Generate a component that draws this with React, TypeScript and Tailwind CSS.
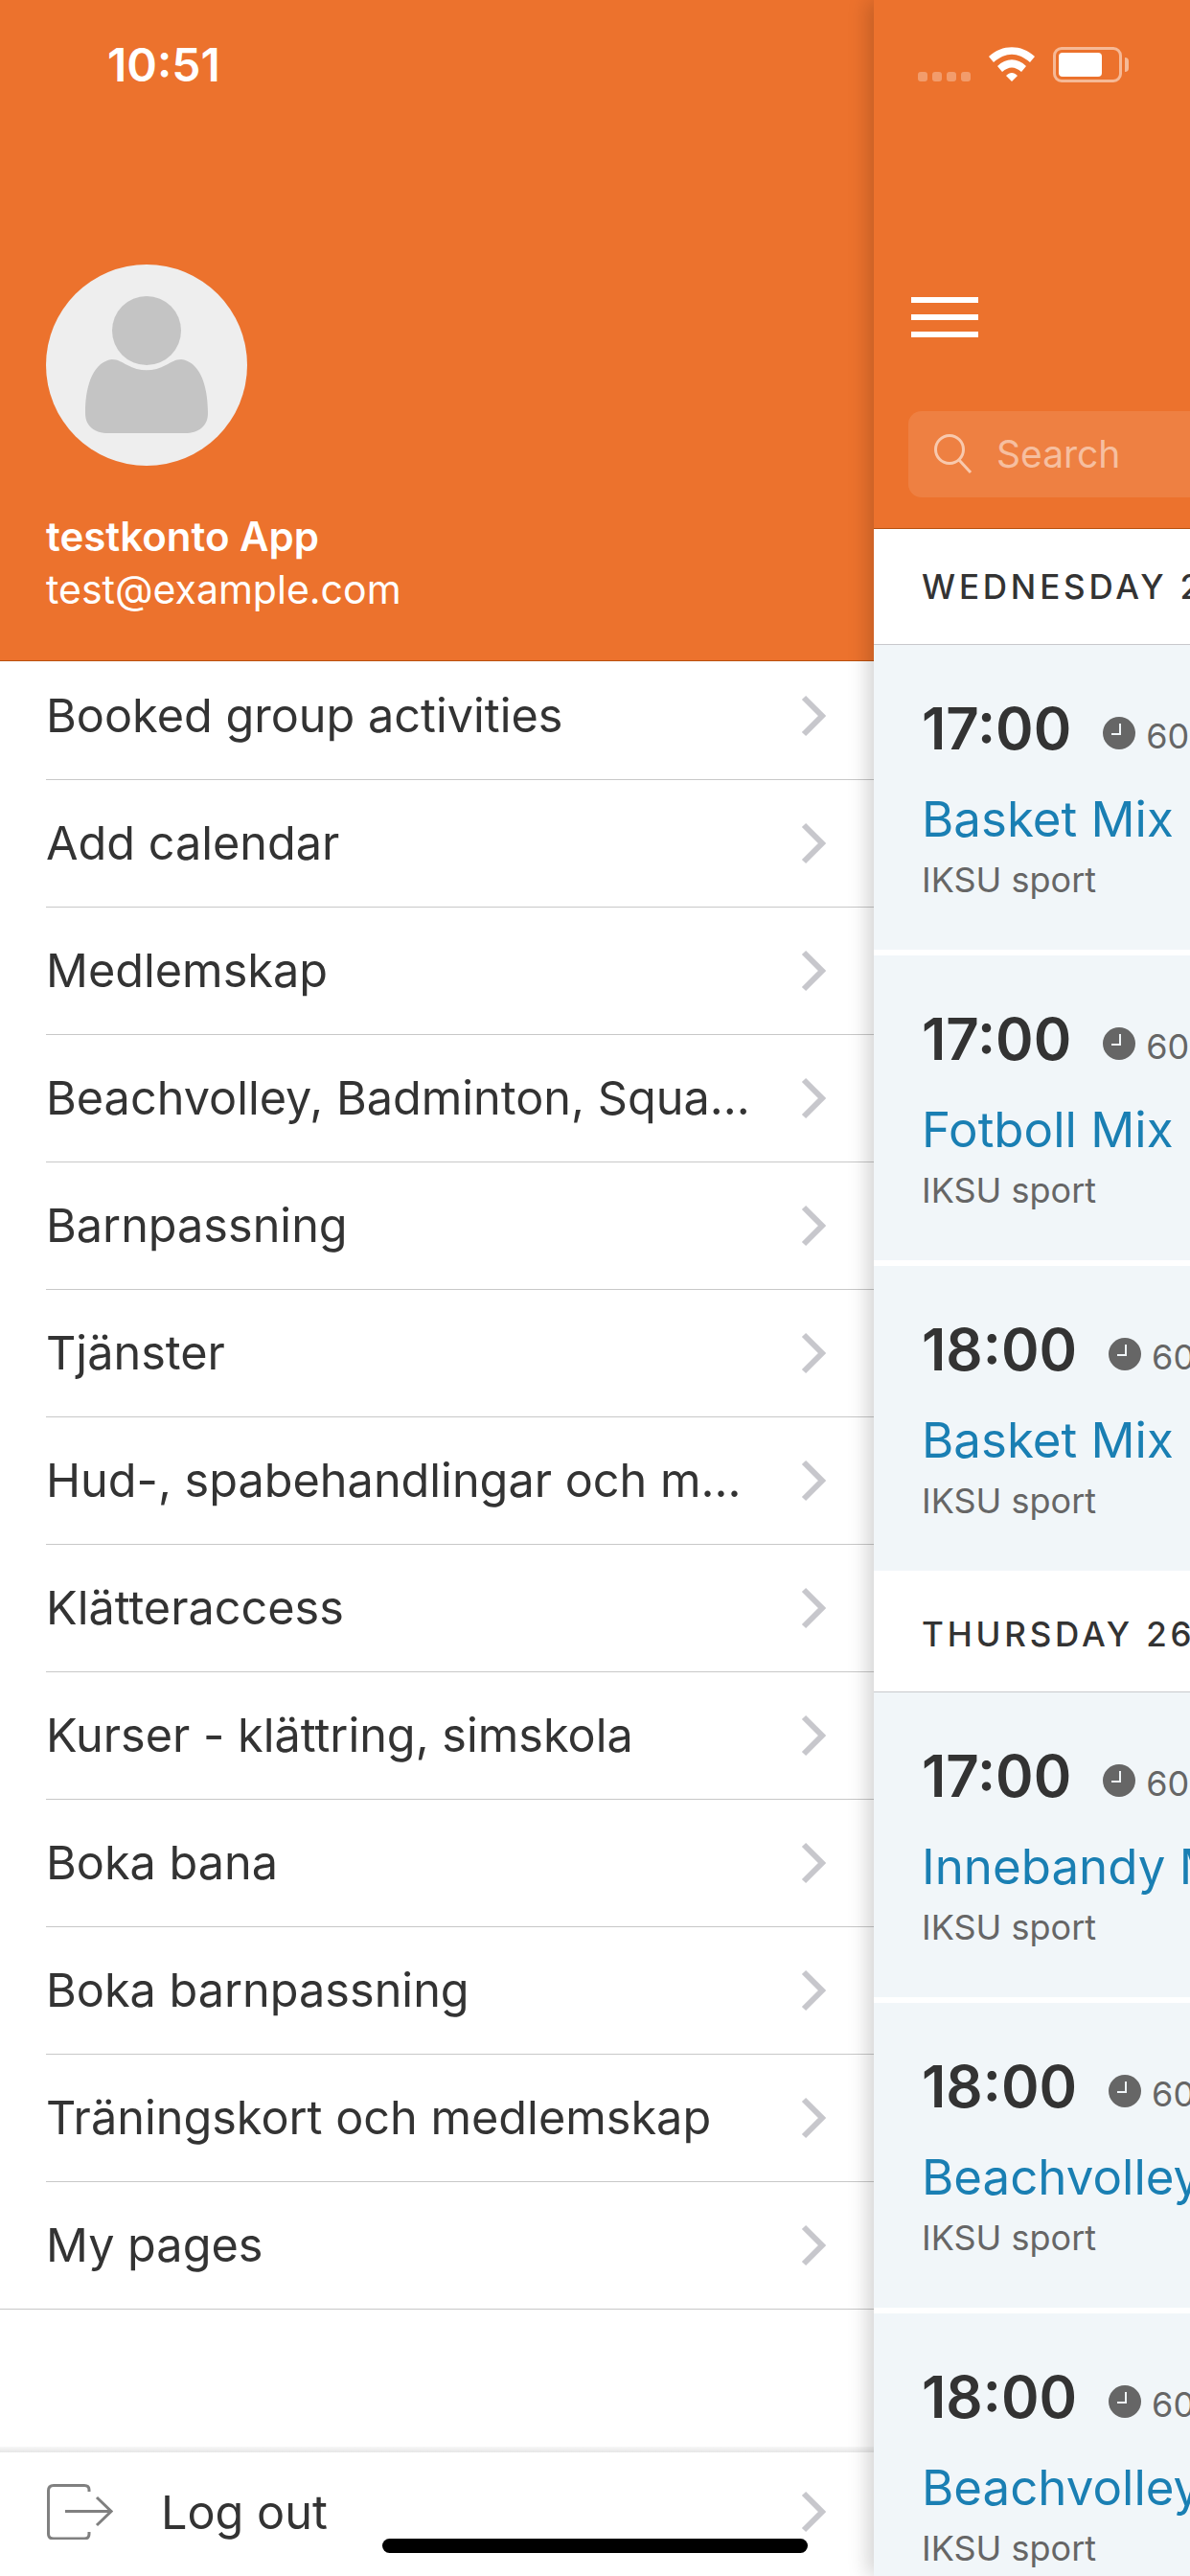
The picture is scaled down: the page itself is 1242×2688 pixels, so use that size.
const items = [
  "Booked group activities",
  "Add calendar",
  "Medlemskap",
  "Beachvolley, Badminton, Squash",
  "Barnpassning",
  "Tjänster",
  "Hud-, spabehandlingar och massage",
  "Klätteraccess",
  "Kurser - klättring, simskola",
  "Boka bana",
  "Boka barnpassning",
  "Träningskort och medlemskap",
  "My pages",
];

type Card = { time: string; title: string };

const wednesday: Card[] = [
  { time: "17:00", title: "Basket Mix - Vuxna" },
  { time: "17:00", title: "Fotboll Mix" },
  { time: "18:00", title: "Basket Mix - Vuxna" },
];

const thursday: Card[] = [
  { time: "17:00", title: "Innebandy Mix" },
  { time: "18:00", title: "Beachvolley Mix" },
  { time: "18:00", title: "Beachvolley Mix" },
];

const Chevron = () => (
  <svg width="26" height="44" viewBox="0 0 26 44" fill="none" className="shrink-0">
    <path d="M3 3 L22 22 L3 41" stroke="#c7c7cc" strokeWidth="6" />
  </svg>
);

const ClockDot = () => (
  <svg width="34" height="34" viewBox="0 0 34 34">
    <circle cx="17" cy="17" r="17" fill="#666666" />
    <path d="M18 7 V18 H9" stroke="#f1f6f9" strokeWidth="2" fill="none" />
  </svg>
);

const EventCard = ({ card }: { card: Card }) => (
  <div className="h-[318px] shrink-0 mb-[6px] bg-[#f1f6f9] pl-[50px] pt-[56px] whitespace-nowrap">
    <div className="flex items-end h-[62px]">
      <span className="text-[60px] leading-[62px] font-semibold text-[#333333]">{card.time}</span>
      <span className="ml-[33px] mb-[9px]">
        <ClockDot />
      </span>
      <span className="ml-[11px] text-[36px] leading-[40px] text-[#666666] mb-[3px]">60 min</span>
    </div>
    <div className="mt-[34px] text-[51px] leading-[60px] text-[#1a7fb3]">{card.title}</div>
    <div className="mt-[11px] text-[36px] leading-[44px] text-[#666666]">IKSU sport</div>
  </div>
);

export default function App() {
  return (
    <div
      className="relative w-[1242px] h-[2688px] overflow-hidden flex bg-white"
      style={{ fontFamily: "Inter, 'Noto Sans', sans-serif" }}
    >
      {/* drawer */}
      <div className="w-[912px] shrink-0 h-full flex flex-col">
        <div className="h-[690px] shrink-0 bg-[#ec722d] border-b border-[#b8500f] pl-[48px] flex flex-col">
          <div className="mt-[44px] ml-[64px] text-[48px] leading-[48px] font-semibold text-white">10:51</div>
          <div className="mt-[184px] w-[210px] h-[210px] rounded-full bg-[#eeeeee] flex items-center justify-center">
            <svg width="132" height="144" viewBox="0 0 132 144">
              <circle cx="66" cy="36" r="36" fill="#c4c4c4" />
              <path d="M30 66 C36 66 40 69 46 72 C58 79 74 79 86 72 C92 69 96 66 102 66 C120 68 130 90 130 122 C130 136 120 143 106 143 H26 C12 143 2 136 2 122 C2 90 12 68 30 66 Z" fill="#c4c4c4" />
            </svg>
          </div>
          <div className="mt-[50px] text-[42px] leading-[48px] font-semibold text-white">testkonto App</div>
          <div className="mt-[7px] text-[41px] leading-[48px] text-white">test@example.com</div>
        </div>
        <div className="flex flex-col shrink-0">
          {items.map((item, i) => (
            <div
              key={item}
              className={`border-b border-[#c8c8c8] ${i === 0 ? "h-[124px] pb-[9px]" : "h-[133px]"} ${i === items.length - 1 ? "pl-[48px]" : "ml-[48px]"} pr-[50px] flex items-center justify-between`}
            >
              <span className="text-[48.6px] text-[#333333] w-[738px] truncate">{item}</span>
              <Chevron />
            </div>
          ))}
        </div>
        <div className="mt-[143px] h-[6px] shrink-0 bg-linear-to-b from-[#f8f8f8] to-[#e6e6e6]" />
        <div className="flex-1 flex items-start pl-[48px] pr-[50px] pt-[33px]">
          <svg width="70" height="58" viewBox="0 0 70 58" fill="none" className="shrink-0">
            <path d="M45 8 V6 Q45 1.5 40 1.5 H8 Q2.5 1.5 2.5 7 V52 Q2.5 57 8 57 H40 Q45 57 45 52 V50" stroke="#808080" strokeWidth="3" />
            <path d="M20 28.5 H67 M53 14 L68 28.5 L53 43" stroke="#808080" strokeWidth="3" />
          </svg>
          <span className="ml-[50px] text-[48.6px] leading-[60px] text-[#333333] flex-1">Log out</span>
          <span className="mt-[7px]">
            <Chevron />
          </span>
        </div>
      </div>

      {/* main panel, pushed off the right edge */}
      <div className="w-[1242px] shrink-0 h-full flex flex-col shadow-[-6px_0_20px_rgba(0,0,0,0.18)] z-10 bg-white">
        <div className="h-[552px] shrink-0 bg-[#ec722d] border-b border-[#b8500f] pl-[36px]">
          <div className="h-[310px] pt-[49px] flex items-start">
            <div className="flex gap-[5px] mt-[26px] ml-[10px]">
              <span className="w-[10px] h-[10px] rounded-[3px] bg-white/30" />
              <span className="w-[10px] h-[10px] rounded-[3px] bg-white/30" />
              <span className="w-[10px] h-[10px] rounded-[3px] bg-white/30" />
              <span className="w-[10px] h-[10px] rounded-[3px] bg-white/30" />
            </div>
            <svg width="48" height="36" viewBox="0 0 48 36" className="ml-[19px]">
              <path d="M0 10 C14 -3 34 -3 48 10 L43 16 C30 5 18 5 5 16 Z" fill="#fff" />
              <path d="M9 20 C18 11 30 11 39 20 L34 26 C27 20 21 20 14 26 Z" fill="#fff" />
              <path d="M18 30 C22 26 26 26 30 30 L24 36 Z" fill="#fff" />
            </svg>
            <div className="ml-[19px] w-[72px] h-[37px] rounded-[9px] border-[3px] border-white/50 p-[3px]">
              <div className="w-[45px] h-full rounded-[4px] bg-white" />
            </div>
            <div className="ml-[3px] mt-[11px] w-[4px] h-[15px] rounded-r-full bg-white/50" />
          </div>
          <div className="ml-[3px] w-[70px] flex flex-col gap-[12px]">
            <div className="h-[6px] bg-white" />
            <div className="h-[6px] bg-white" />
            <div className="h-[6px] bg-white" />
          </div>
          <div className="mt-[77px] h-[90px] rounded-[14px] bg-white/10 flex items-center pl-[27px]">
            <svg width="40" height="42" viewBox="0 0 40 42" fill="none" className="shrink-0">
              <circle cx="16" cy="16" r="14.5" stroke="#f8c9ae" strokeWidth="3" />
              <path d="M26 27 L38 40" stroke="#f8c9ae" strokeWidth="3" />
            </svg>
            <span className="ml-[25px] text-[39px] text-white/50">Search</span>
          </div>
        </div>
        <div className="h-[121px] shrink-0 bg-white border-b border-[#c8c8cc] flex items-center pl-[50px] text-[35px] font-medium tracking-[3.8px] text-[#333333] whitespace-nowrap">
          WEDNESDAY 25 SEPTEMBER
        </div>
        {wednesday.map((c, i) => (
          <EventCard key={i} card={c} />
        ))}
        <div className="h-[127px] -mt-[6px] pt-[6px] shrink-0 bg-white border-b border-[#c8c8cc] flex items-center pl-[50px] text-[35px] font-medium tracking-[3.8px] text-[#333333] whitespace-nowrap">
          THURSDAY 26 SEPTEMBER
        </div>
        {thursday.map((c, i) => (
          <EventCard key={i} card={c} />
        ))}
      </div>

      {/* home indicator */}
      <div className="absolute left-[399px] top-[2649px] w-[444px] h-[15px] rounded-full bg-black z-20" />
    </div>
  );
}
